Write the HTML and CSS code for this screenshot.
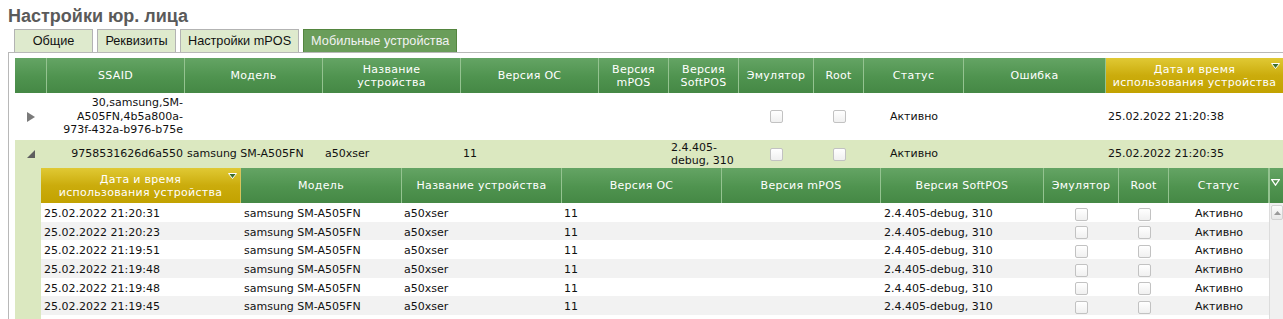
FILE: index.html
```html
<!DOCTYPE html>
<html>
<head>
    <title>Настройки юр. лица</title>
    <link rel="stylesheet" href="styles.css">
</head>
<body>
<h1 class="title">Настройки юр. лица</h1>

<div class="tabs">
    <span class="tab">Общие</span>
    <span class="tab">Реквизиты</span>
    <span class="tab">Настройки mPOS</span>
    <span class="tab active">Мобильные устройства</span>
</div>

<div class="panel">
    <table class="grid main-grid">
        <colgroup>
            <col style="width: 32px">
            <col style="width: 138px">
            <col style="width: 138px">
            <col style="width: 138px">
            <col style="width: 138px">
            <col style="width: 70px">
            <col style="width: 70px">
            <col style="width: 75px">
            <col style="width: 50px">
            <col style="width: 100px">
            <col style="width: 142px">
            <col style="width: 177px">
        </colgroup>
        <thead>
        <tr>
            <th></th>
            <th>SSAID</th>
            <th>Модель</th>
            <th>Название устройства</th>
            <th>Версия ОС</th>
            <th>Версия mPOS</th>
            <th>Версия SoftPOS</th>
            <th>Эмулятор</th>
            <th>Root</th>
            <th>Статус</th>
            <th>Ошибка</th>
            <th class="sorted">Дата и время<br>использования устройства
                <svg class="sort-arrow" width="9" height="6" viewBox="0 0 9 6"><polygon points="0.5,0.5 8.5,0.5 4.5,5.5" fill="#3d6e2c" stroke="#ffffff" stroke-width="1"/></svg>
            </th>
        </tr>
        </thead>
        <tbody>
        <tr class="row-tall">
            <td class="expander">
                <svg width="8" height="10" viewBox="0 0 8 10"><polygon points="0,0 8,5 0,10" fill="#7a7a7a"/></svg>
            </td>
            <td class="right">30,samsung,SM-A505FN,4b5a800a-973f-432a-b976-b75e</td>
            <td></td>
            <td></td>
            <td></td>
            <td></td>
            <td></td>
            <td class="center"><span class="checkbox"></span></td>
            <td class="center"><span class="checkbox"></span></td>
            <td class="center">Активно</td>
            <td></td>
            <td>25.02.2022 21:20:38</td>
        </tr>
        <tr class="row-open">
            <td class="expander">
                <svg width="8" height="8" viewBox="0 0 8 8"><polygon points="8,0 8,8 0,8" fill="#5e5e5e"/></svg>
            </td>
            <td class="right">9758531626d6a550</td>
            <td>samsung SM-A505FN</td>
            <td>a50xser</td>
            <td>11</td>
            <td></td>
            <td>2.4.405-debug, 310</td>
            <td class="center"><span class="checkbox"></span></td>
            <td class="center"><span class="checkbox"></span></td>
            <td class="center">Активно</td>
            <td></td>
            <td>25.02.2022 21:20:35</td>
        </tr>
        <tr class="detail">
            <td colspan="12">
                <table class="grid sub-grid">
                    <colgroup>
                        <col style="width: 200px">
                        <col style="width: 161px">
                        <col style="width: 160px">
                        <col style="width: 160px">
                        <col style="width: 159px">
                        <col style="width: 163px">
                        <col style="width: 75px">
                        <col style="width: 50px">
                        <col style="width: 100px">
                        <col style="width: 14px">
                    </colgroup>
                    <thead>
                    <tr>
                        <th class="sorted">Дата и время<br>использования устройства
                            <svg class="sort-arrow" width="9" height="6" viewBox="0 0 9 6"><polygon points="0.5,0.5 8.5,0.5 4.5,5.5" fill="#3d6e2c" stroke="#ffffff" stroke-width="1"/></svg>
                        </th>
                        <th>Модель</th>
                        <th>Название устройства</th>
                        <th>Версия ОС</th>
                        <th>Версия mPOS</th>
                        <th>Версия SoftPOS</th>
                        <th>Эмулятор</th>
                        <th>Root</th>
                        <th>Статус</th>
                        <th class="menu">
                            <svg width="9" height="7" viewBox="0 0 9 7"><polygon points="0.7,0.7 8.3,0.7 4.5,6.2" fill="#4f8e4b" stroke="#ffffff" stroke-width="1.2"/></svg>
                        </th>
                    </tr>
                    </thead>
                    <tbody id="subRows"></tbody>
                </table>
            </td>
        </tr>
        </tbody>
    </table>
</div>

<script>
    const usages = [
        '25.02.2022 21:20:31',
        '25.02.2022 21:20:23',
        '25.02.2022 21:19:51',
        '25.02.2022 21:19:48',
        '25.02.2022 21:19:48',
        '25.02.2022 21:19:45',
        '25.02.2022 21:19:40'
    ];

    const subRows = document.getElementById('subRows');

    usages.forEach((date, index) => {
        const row = document.createElement('tr');
        row.innerHTML = `
            <td>${date}</td>
            <td>samsung SM-A505FN</td>
            <td class="tight">a50xser</td>
            <td class="tight">11</td>
            <td></td>
            <td>2.4.405-debug, 310</td>
            <td class="center"><span class="checkbox"></span></td>
            <td class="center"><span class="checkbox"></span></td>
            <td class="center">Активно</td>
        `;
        if (index === 0) {
            const scroll = document.createElement('td');
            scroll.className = 'scrollbar';
            scroll.rowSpan = usages.length;
            scroll.innerHTML = '<div class="scroll-up"><svg width="7" height="4" viewBox="0 0 7 4"><polygon points="0,4 3.5,0 7,4" fill="#9a9a9a"/></svg></div>';
            row.appendChild(scroll);
        }
        subRows.appendChild(row);
    });
</script>
</body>
</html>
```

FILE: styles.css
```css
html, body {
    margin: 0;
    height: 319px;
    overflow: hidden;
}

body {
    padding: 6px 0 0 8px;
    background-color: #ffffff;
    font-family: "Liberation Sans", Arial, sans-serif;
}

.title {
    margin: 0;
    font-size: 18px;
    line-height: 20px;
    font-weight: bold;
    color: #5a5a5a;
}

.tabs {
    display: flex;
    gap: 4px;
    margin: 3px 0 0 6px;
    height: 23px;
}

.tab {
    box-sizing: border-box;
    min-width: 79px;
    height: 23px;
    padding: 0 7px;
    border: 1px solid #b3b3b3;
    border-bottom: none;
    background-color: #deeacd;
    font-size: 12.7px;
    line-height: 22px;
    text-align: center;
    color: #111111;
}

.tab.active {
    background-color: #6a9d5a;
    border-color: #54853f;
    color: #f2f2f2;
}

.panel {
    border-top: 1px solid #b8b8b8;
    border-left: 1px solid #b8b8b8;
    padding: 5px 0 0 6px;
}

.grid {
    table-layout: fixed;
    border-collapse: separate;
    border-spacing: 0;
    font-family: "DejaVu Sans", Verdana, sans-serif;
    font-size: 11px;
    color: #111111;
}

.main-grid {
    width: 1268px;
}

.sub-grid {
    width: 1242px;
}

.grid th {
    box-sizing: border-box;
    height: 35px;
    padding: 0 4px;
    background: linear-gradient(#64a464, #4f934f 55%, #458845);
    border-right: 1px solid #94c390;
    color: #ffffff;
    font-weight: normal;
    line-height: 13px;
    letter-spacing: 0.3px;
    text-align: center;
    position: relative;
}

.grid th:last-child {
    border-right: none;
}

.grid th.sorted {
    background: linear-gradient(#e0c934, #cbac0c 50%, #c2a200);
    border-right-color: #d8c35a;
    padding: 0 2px;
}

.sort-arrow {
    position: absolute;
    top: 5px;
    right: 3px;
}

.grid th.menu {
    vertical-align: top;
    padding: 8px 0 0 1px;
    text-align: left;
    border-left: 1px solid #94c390;
}

.grid td {
    padding: 0 2px;
    vertical-align: middle;
    line-height: 13.5px;
    overflow: hidden;
}

.grid td.right {
    text-align: right;
}

.grid td.center {
    text-align: center;
}

.grid td.expander {
    text-align: center;
    padding: 0;
}

.grid td.expander svg {
    display: inline-block;
    vertical-align: middle;
}

.row-tall td {
    height: 47px;
    background-color: #ffffff;
}

.row-open td {
    height: 28px;
    background-color: #dbe8c0;
}

.detail > td {
    padding: 0 0 0 26px;
    background-color: #dbe8c0;
    vertical-align: top;
}

.sub-grid tbody td {
    height: 18.67px;
    padding: 0 3px;
    line-height: 15.5px;
    vertical-align: bottom;
    background-color: #ffffff;
    white-space: nowrap;
}

.sub-grid tbody td.tight {
    padding-left: 2px;
}

.sub-grid tbody tr:nth-child(even) td {
    background-color: #f2f2f2;
}

.sub-grid tbody td.scrollbar {
    padding: 2px 0 0 1px;
    vertical-align: top;
    background-color: #f0f0f0;
    border-left: 1px solid #dcdcdc;
}

.scroll-up {
    box-sizing: border-box;
    width: 12px;
    height: 15px;
    border: 1px solid #d2d2d2;
    border-radius: 2px;
    background: linear-gradient(#fbfbfb, #e8e8e8);
    display: flex;
    align-items: center;
    justify-content: center;
}

.checkbox {
    display: inline-block;
    box-sizing: border-box;
    width: 13px;
    height: 13px;
    border: 1px solid #c2c2c2;
    border-radius: 2px;
    background: linear-gradient(#ffffff, #f0f0f0);
    vertical-align: middle;
}
```
